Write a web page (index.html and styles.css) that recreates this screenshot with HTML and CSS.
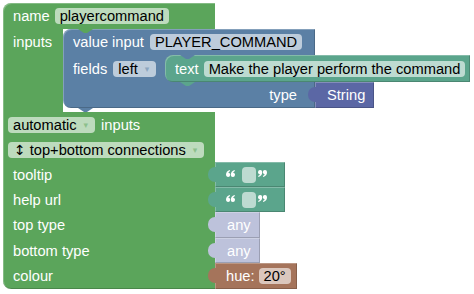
FILE: index.html
```html
<!DOCTYPE html>
<html lang="en">
<head>
    <meta charset="UTF-8">
    <meta name="viewport" content="width=device-width, initial-scale=1.0">
    <title>Block Factory</title>
    <link rel="stylesheet" href="styles.css">
</head>
<body>

    <div class="workspace">
        <div class="factory">
            <div class="factory-top">
                <span class="label">name</span>
                <span class="field">playercommand</span>
            </div>

            <div class="factory-stmt">
                <div class="factory-arm"><span class="label">inputs</span></div>

                <div class="block input-block">
                    <div class="input-top">
                        <span class="label">value input</span>
                        <span class="field">PLAYER_COMMAND</span>
                    </div>
                    <div class="input-stmt">
                        <div class="input-arm">
                            <span class="label">fields</span>
                            <span class="field dropdown blue-drop">left<i class="arrow">▾</i></span>
                        </div>
                        <div class="block text-block">
                            <span class="label">text</span>
                            <span class="field">Make the player perform the command</span>
                        </div>
                    </div>
                    <div class="input-type">
                        <div class="input-type-label"><span class="label">type</span></div>
                        <div class="block attached string-block">String</div>
                    </div>
                </div>
            </div>

            <div class="factory-rows">
                <div class="factory-line">
                    <div class="cell cell-field">
                        <span class="field dropdown">automatic<i class="arrow">▾</i></span>
                        <span class="label">inputs</span>
                    </div>
                </div>
                <div class="factory-line">
                    <div class="cell cell-field">
                        <span class="field dropdown"><b class="updown">↕</b>top+bottom connections<i class="arrow">▾</i></span>
                    </div>
                </div>
                <div class="factory-line">
                    <div class="cell"><span class="label">tooltip</span></div>
                    <div class="block attached quote-block">
                        <svg class="quote" viewBox="0 0 9 7"><path d="M0 4.8C0 2.4 1.3 .7 3.8 0L4.1 1C3 1.6 2.5 2.2 2.4 2.8A2.1 2.1 0 1 1 0 4.8Z"/><path d="M4.8 4.8C4.8 2.4 6.1 .7 8.6 0L8.9 1C7.8 1.6 7.3 2.2 7.2 2.8A2.1 2.1 0 1 1 4.8 4.8Z"/></svg>
                        <span class="field empty"></span>
                        <svg class="quote close" viewBox="0 0 9 7"><path d="M0 4.8C0 2.4 1.3 .7 3.8 0L4.1 1C3 1.6 2.5 2.2 2.4 2.8A2.1 2.1 0 1 1 0 4.8Z"/><path d="M4.8 4.8C4.8 2.4 6.1 .7 8.6 0L8.9 1C7.8 1.6 7.3 2.2 7.2 2.8A2.1 2.1 0 1 1 4.8 4.8Z"/></svg>
                    </div>
                </div>
                <div class="factory-line">
                    <div class="cell"><span class="label">help url</span></div>
                    <div class="block attached quote-block">
                        <svg class="quote" viewBox="0 0 9 7"><path d="M0 4.8C0 2.4 1.3 .7 3.8 0L4.1 1C3 1.6 2.5 2.2 2.4 2.8A2.1 2.1 0 1 1 0 4.8Z"/><path d="M4.8 4.8C4.8 2.4 6.1 .7 8.6 0L8.9 1C7.8 1.6 7.3 2.2 7.2 2.8A2.1 2.1 0 1 1 4.8 4.8Z"/></svg>
                        <span class="field empty"></span>
                        <svg class="quote close" viewBox="0 0 9 7"><path d="M0 4.8C0 2.4 1.3 .7 3.8 0L4.1 1C3 1.6 2.5 2.2 2.4 2.8A2.1 2.1 0 1 1 0 4.8Z"/><path d="M4.8 4.8C4.8 2.4 6.1 .7 8.6 0L8.9 1C7.8 1.6 7.3 2.2 7.2 2.8A2.1 2.1 0 1 1 4.8 4.8Z"/></svg>
                    </div>
                </div>
                <div class="factory-line tall">
                    <div class="cell"><span class="label">top type</span></div>
                    <div class="block attached any-block">any</div>
                </div>
                <div class="factory-line">
                    <div class="cell"><span class="label">bottom type</span></div>
                    <div class="block attached any-block">any</div>
                </div>
                <div class="factory-line tall">
                    <div class="cell"><span class="label">colour</span></div>
                    <div class="block attached hue-block">
                        <span class="label">hue:</span>
                        <span class="field">20°</span>
                    </div>
                </div>
            </div>
        </div>
    </div>

</body>
</html>
```

FILE: styles.css
```css
body {
    margin: 0;
    background: #fff;
    font-family: "Liberation Sans", Arial, sans-serif;
    font-size: 14.67px;
    color: #fff;
}
.workspace {
    padding: 3px;
}
.label {
    white-space: nowrap;
    line-height: 16px;
}
.field {
    display: inline-flex;
    align-items: center;
    height: 16px;
    line-height: 16px;
    padding: 0 5px;
    border-radius: 4px;
    background: rgba(255, 255, 255, 0.6);
    color: #000;
    white-space: nowrap;
}
.dropdown {
    padding-right: 7px;
}
.arrow {
    font-style: normal;
    font-family: "DejaVu Sans", sans-serif;
    font-size: 9px;
    margin-left: 7px;
    color: rgba(91, 165, 91, 0.5);
}
.blue-drop .arrow {
    color: rgba(91, 128, 165, 0.5);
}
.updown {
    font-weight: normal;
    font-family: "DejaVu Sans", sans-serif;
    font-size: 14px;
    margin-right: 4px;
    margin-left: 1px;
}
.block {
    position: relative;
    box-sizing: border-box;
    box-shadow: inset 1px 1px 0 rgba(255, 255, 255, 0.25), inset -1px -1px 0 rgba(0, 0, 0, 0.18);
}

/* green factory block */
.factory-top {
    width: 212px;
    height: 26px;
    box-sizing: border-box;
    display: flex;
    align-items: center;
    gap: 5px;
    padding-left: 10px;
    background: #5ba55b;
    border-radius: 8px 0 0 0;
    box-shadow: inset 1px 1px 0 rgba(255, 255, 255, 0.25);
}
.factory-stmt {
    display: flex;
}
.factory-arm {
    width: 60px;
    flex-shrink: 0;
    box-sizing: border-box;
    padding: 5px 0 0 10px;
    background: #5ba55b;
    box-shadow: inset 1px 0 0 rgba(255, 255, 255, 0.25);
}
.factory-rows {
    width: 212px;
    background: #5ba55b;
    border-radius: 0 0 0 8px;
    box-shadow: inset 1px 0 0 rgba(255, 255, 255, 0.25), inset 0 -1px 0 rgba(0, 0, 0, 0.18);
}
.factory-line {
    display: flex;
    height: 25px;
}
.factory-line.tall {
    height: 26px;
}
.cell {
    width: 212px;
    flex-shrink: 0;
    box-sizing: border-box;
    display: flex;
    align-items: center;
    gap: 6px;
    padding-left: 10px;
}
.cell-field {
    padding-left: 5px;
}

/* value input block */
.input-block {
    width: 252px;
    flex-shrink: 0;
    margin-bottom: 4px;
    background: #5b80a5;
    border-radius: 8px 0 0 8px;
}
.input-block::before,
.text-block::before {
    content: "";
    position: absolute;
    top: 0;
    left: 15px;
    width: 15px;
    height: 4px;
    background: #5ba55b;
    clip-path: polygon(0 0, 100% 0, 60% 100%, 40% 100%);
}
.text-block::before {
    background: #5b80a5;
}
.input-block::after,
.text-block::after {
    content: "";
    position: absolute;
    bottom: -4px;
    left: 15px;
    width: 15px;
    height: 4px;
    background: #5b80a5;
    clip-path: polygon(0 0, 100% 0, 60% 100%, 40% 100%);
    z-index: 1;
}
.text-block::after {
    background: #5ba58c;
}
.input-top {
    height: 26px;
    display: flex;
    align-items: center;
    gap: 6px;
    padding-left: 10px;
}
.input-stmt {
    display: flex;
}
.input-arm {
    width: 102px;
    height: 27px;
    flex-shrink: 0;
    box-sizing: border-box;
    display: flex;
    align-items: center;
    gap: 6px;
    padding-left: 10px;
}
.text-block {
    width: 305px;
    height: 27px;
    flex-shrink: 0;
    display: flex;
    align-items: center;
    gap: 5px;
    padding-left: 10px;
    background: #5ba58c;
    border-radius: 8px 0 0 8px;
}
.input-type {
    display: flex;
    height: 26px;
}
.input-type-label {
    width: 252px;
    flex-shrink: 0;
    box-sizing: border-box;
    display: flex;
    align-items: center;
    justify-content: flex-end;
    padding-right: 18px;
}

/* blocks plugged into value inputs */
.attached {
    flex-shrink: 0;
    display: flex;
    align-items: center;
}
.attached::before {
    content: "";
    position: absolute;
    left: -7px;
    top: 5px;
    width: 8px;
    height: 15px;
    background: inherit;
    border-radius: 7px 0 0 7px;
}
.string-block {
    width: 59px;
    padding-left: 12px;
    background: #5b67a5;
}
.quote-block {
    width: 70px;
    padding-left: 11px;
    background: #5ba58c;
}
.quote {
    width: 9px;
    height: 7px;
    margin-top: -3px;
    fill: #fff;
}
.quote.close {
    transform: rotate(180deg);
}
.field.empty {
    width: 14px;
    height: 16px;
    padding: 0;
    margin: 0 2px 0 7px;
}
.any-block {
    width: 45px;
    padding-left: 12px;
    background: #bdc2db;
}
.hue-block {
    width: 82px;
    gap: 4px;
    padding-left: 11px;
    background: #a5745b;
}
```
